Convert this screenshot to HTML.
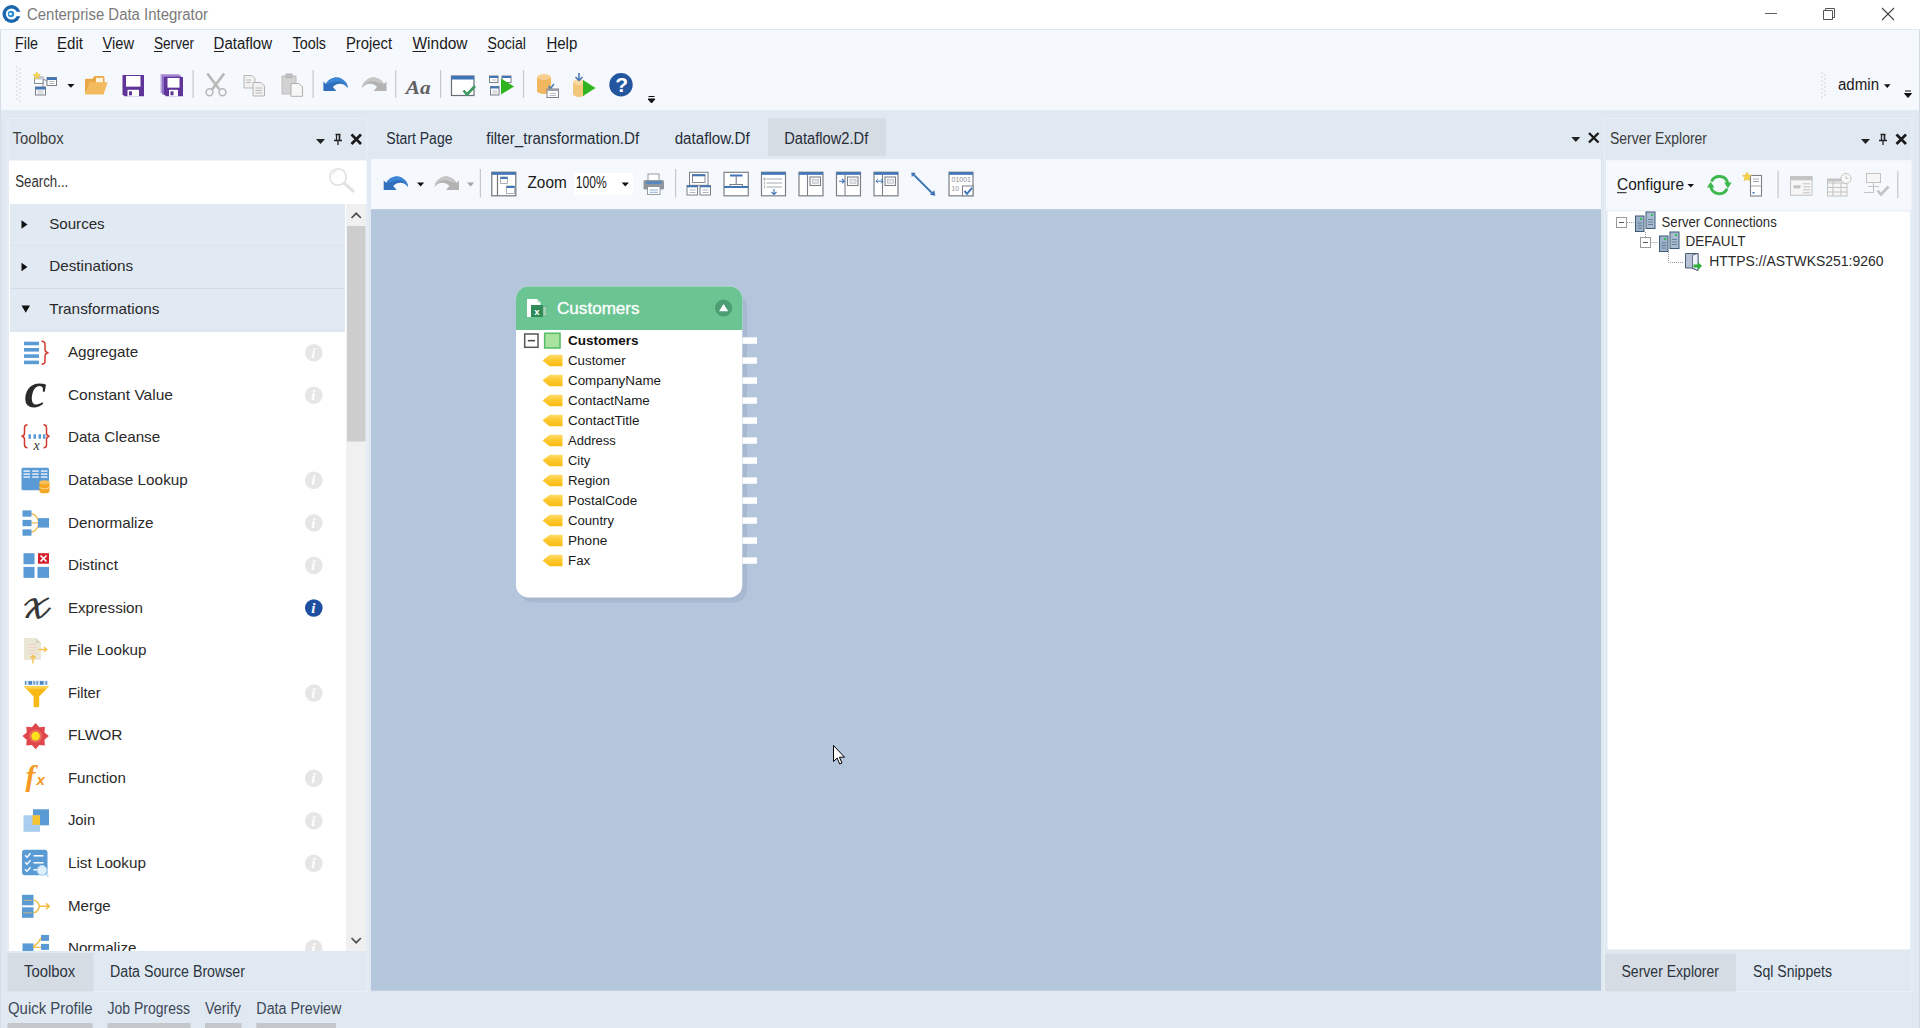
<!DOCTYPE html>
<html><head><meta charset="utf-8"><title>Centerprise Data Integrator</title>
<style>
*{margin:0;padding:0}
html,body{width:1920px;height:1028px;overflow:hidden;background:#e0e9f2}
svg{display:block;font-family:"Liberation Sans","DejaVu Sans",sans-serif}
text{white-space:pre}
</style></head><body>
<svg width="1920" height="1028" viewBox="0 0 1920 1028">
<rect x="0" y="0" width="1920" height="1028" fill="#e0e9f2" />
<rect x="0" y="0" width="1920" height="29" fill="#ffffff" />
<rect x="0" y="29" width="1920" height="1" fill="#e3e6ea" />
<rect x="0" y="30" width="1920" height="80.2" fill="#f5f8fc" />
<rect x="0" y="30" width="1" height="998" fill="#d6dde6" />
<rect x="1919" y="30" width="1" height="998" fill="#d3dae3" />
<g transform="translate(11.5,14)"><circle r="9" fill="#1b66ad"/><circle r="5.6" fill="#fff"/><rect x="2" y="-2.2" width="8" height="4.4" fill="#fff"/><circle r="3.2" cx="-0.5" fill="#2d8fd3"/><circle r="1.3" cx="-1" fill="#fff"/></g>
<text x="27" y="20" font-size="16" fill="#7a7a7a" textLength="181" lengthAdjust="spacingAndGlyphs">Centerprise Data Integrator</text>
<path d="M1765 13.5h12" stroke="#5f5f5f" stroke-width="1" fill="none"/>
<path d="M1823.5 10.5h9v9h-9z M1825.5 10.5v-2h9v9h-2" stroke="#555" stroke-width="1" fill="none"/>
<path d="M1882 8l12 12M1894 8l-12 12" stroke="#444" stroke-width="1.1" fill="none"/>
<text x="15" y="48.6" font-size="16" fill="#1a1a1a" textLength="23" lengthAdjust="spacingAndGlyphs">File</text>
<path d="M15 51.5H21.5" stroke="#1a1a1a" stroke-width="1"/>
<text x="57" y="48.6" font-size="16" fill="#1a1a1a" textLength="26" lengthAdjust="spacingAndGlyphs">Edit</text>
<path d="M57.5 51.5H64.5" stroke="#1a1a1a" stroke-width="1"/>
<text x="102.5" y="48.6" font-size="16" fill="#1a1a1a" textLength="31.5" lengthAdjust="spacingAndGlyphs">View</text>
<path d="M102.5 51.5H111" stroke="#1a1a1a" stroke-width="1"/>
<text x="154" y="48.6" font-size="16" fill="#1a1a1a" textLength="40" lengthAdjust="spacingAndGlyphs">Server</text>
<path d="M154 51.5H162.5" stroke="#1a1a1a" stroke-width="1"/>
<text x="213.6" y="48.6" font-size="16" fill="#1a1a1a" textLength="58.4" lengthAdjust="spacingAndGlyphs">Dataflow</text>
<path d="M214 51.5H224" stroke="#1a1a1a" stroke-width="1"/>
<text x="292.5" y="48.6" font-size="16" fill="#1a1a1a" textLength="33.5" lengthAdjust="spacingAndGlyphs">Tools</text>
<path d="M292.5 51.5H300" stroke="#1a1a1a" stroke-width="1"/>
<text x="346" y="48.6" font-size="16" fill="#1a1a1a" textLength="46" lengthAdjust="spacingAndGlyphs">Project</text>
<path d="M346.5 51.5H354.5" stroke="#1a1a1a" stroke-width="1"/>
<text x="412.5" y="48.6" font-size="16" fill="#1a1a1a" textLength="55.0" lengthAdjust="spacingAndGlyphs">Window</text>
<path d="M412.5 51.5H426" stroke="#1a1a1a" stroke-width="1"/>
<text x="487.5" y="48.6" font-size="16" fill="#1a1a1a" textLength="38.5" lengthAdjust="spacingAndGlyphs">Social</text>
<path d="M487.5 51.5H494.5" stroke="#1a1a1a" stroke-width="1"/>
<text x="546.4" y="48.6" font-size="16" fill="#1a1a1a" textLength="30.9" lengthAdjust="spacingAndGlyphs">Help</text>
<path d="M546.5 51.5H556.7" stroke="#1a1a1a" stroke-width="1"/>
<g fill="#e3e6eb"><rect x="16" y="66" width="2" height="2"/><rect x="19" y="68" width="2" height="2"/><rect x="16" y="70" width="2" height="2"/><rect x="19" y="72" width="2" height="2"/><rect x="16" y="74" width="2" height="2"/><rect x="19" y="76" width="2" height="2"/><rect x="16" y="78" width="2" height="2"/><rect x="19" y="80" width="2" height="2"/><rect x="16" y="82" width="2" height="2"/><rect x="19" y="84" width="2" height="2"/><rect x="16" y="86" width="2" height="2"/><rect x="19" y="88" width="2" height="2"/><rect x="16" y="90" width="2" height="2"/><rect x="19" y="92" width="2" height="2"/><rect x="16" y="94" width="2" height="2"/><rect x="19" y="96" width="2" height="2"/><rect x="16" y="98" width="2" height="2"/><rect x="19" y="100" width="2" height="2"/></g>
<g fill="#e3e6eb"><rect x="1821" y="72" width="2" height="2"/><rect x="1824" y="74" width="2" height="2"/><rect x="1821" y="76" width="2" height="2"/><rect x="1824" y="78" width="2" height="2"/><rect x="1821" y="80" width="2" height="2"/><rect x="1824" y="82" width="2" height="2"/><rect x="1821" y="84" width="2" height="2"/><rect x="1824" y="86" width="2" height="2"/><rect x="1821" y="88" width="2" height="2"/><rect x="1824" y="90" width="2" height="2"/><rect x="1821" y="92" width="2" height="2"/><rect x="1824" y="94" width="2" height="2"/><rect x="1821" y="96" width="2" height="2"/></g>
<rect x="192.5" y="70" width="1.2" height="28" fill="#c4c8ce"/>
<rect x="312.5" y="70" width="1.2" height="28" fill="#c4c8ce"/>
<rect x="395.1" y="70" width="1.2" height="28" fill="#c4c8ce"/>
<rect x="440.0" y="70" width="1.2" height="28" fill="#c4c8ce"/>
<rect x="522.9" y="70" width="1.2" height="28" fill="#c4c8ce"/>
<g><path d="M41 78l8 4M43 80v9h-3" stroke="#8a8e95" fill="none"/><rect x="34.5" y="77" width="8.5" height="6.5" fill="#fff" stroke="#8a8e95" stroke-width="1"/><rect x="34.5" y="77" width="8.5" height="2.5" fill="#c9ccd2"/><path d="M36.800 72l1 2.300 2.500 0.300-1.900 1.700 0.500 2.500-2.100-1.300-2.100 1.300 0.500-2.500-1.900-1.700 2.500-0.300z" fill="#f6d85a" stroke="#ecc33a" stroke-width="0.700"/><rect x="47" y="77.5" width="9.5" height="8" fill="#fff" stroke="#7b7f86" stroke-width="1"/><rect x="47" y="77.5" width="9.5" height="2.5" fill="#3f74b8"/><rect x="35.5" y="87" width="10" height="8" fill="#fff" stroke="#7b7f86" stroke-width="1"/><rect x="35.5" y="87" width="10" height="2.5" fill="#3f74b8"/><path d="M49 81.5h5.5M49 83.5h5.5M37.5 91h6M37.5 93h6" stroke="#a8acb2" stroke-width="0.8"/></g>
<path d="M67.3 84h7.2l-3.6 3.8z" fill="#111"/>
<g><path d="M85 94.500V80q0-1.200 1.200-1.200h6.300l2-2.800h8.500q1.500 0 1.500 1.500V84H90z" fill="#eaa844"/><path d="M96 77.800h7v5h-7z" fill="#fdf3df"/><path d="M85.300 94.500l4.200-12.300h18.200l-4.200 12.300z" fill="#f3bb5e"/></g>
<path d="M122.5 75h21.5v21.3h-19.5l-2-2z" fill="#5f3599"/><rect x="126.0" y="76" width="14.5" height="10.65" fill="#fff"/><rect x="127.5" y="89.8" width="11.5" height="6.5" fill="#fff"/><rect x="129.0" y="91.3" width="3" height="4" fill="#5f3599"/>
<path d="M160.5 74h19v19h-19z" fill="#b9a4dc"/><path d="M162 75.5h19v19h-19z" fill="#8e6fc6"/><path d="M164 77h19v19.3h-17l-2-2z" fill="#5f3599"/><rect x="167.5" y="78" width="12" height="9.65" fill="#fff"/><rect x="169" y="89.8" width="9" height="6.5" fill="#fff"/><rect x="170.5" y="91.3" width="3" height="4" fill="#5f3599"/>
<g stroke="#b9b9b9" fill="none" stroke-width="2.700"><path d="M207.300 73.500l12.200 16M224.200 73.500l-12.200 16"/><circle cx="209.500" cy="92.200" r="3.400" stroke-width="1.600"/><circle cx="222.500" cy="92.200" r="3.400" stroke-width="1.600"/></g>
<g fill="#f1f1f1" stroke="#b5b5b5"><path d="M244 75.500h8l3 3v9.500h-11z"/><path d="M253 82.500h8l3.500 3.500v10h-11.500z"/></g><path d="M246 80h5M246 82.500h5M255.500 88h6.500M255.500 90.500h6.500M255.500 93h6.500" stroke="#b5b5b5" stroke-width="0.9"/>
<g><rect x="282" y="76" width="14" height="18" fill="#d2d2d2" stroke="#bdbdbd"/><rect x="286" y="74" width="6" height="3.500" fill="#c2c2c2" stroke="#aaa" stroke-width="0.8"/><path d="M291 83.500h8l3.500 3.500v9.300h-11.500z" fill="#f7f7f7" stroke="#b0b0b0"/></g>
<g transform="translate(323.4,76.5)"><path d="M0 14.5V5l2.600 2.400C6 1.500 13 -0.500 18.500 2.500 22.500 4.800 24.300 8 24.300 11.500 21 6.500 14 5.500 9.500 10.500L13 14.500z" fill="#2f6fbd"/><path d="M2.600 7.400C6 1.500 13 -0.500 18.500 2.500 22.500 4.800 24.300 8 24.300 11.500 22 6 15 3 9 6z" fill="#3b86d6"/></g>
<g transform="translate(386.5,76.5) scale(-1,1)"><path d="M0 14.5V5l2.600 2.400C6 1.500 13 -0.500 18.500 2.500 22.500 4.800 24.300 8 24.300 11.500 21 6.500 14 5.500 9.500 10.500L13 14.500z" fill="#b3b3b3"/><path d="M2.600 7.400C6 1.500 13 -0.500 18.500 2.500 22.500 4.800 24.300 8 24.300 11.500 22 6 15 3 9 6z" fill="#c6c6c6"/></g>
<text x="405.8" y="94.3" font-size="19.5" fill="#626262" textLength="24.8" lengthAdjust="spacingAndGlyphs" font-weight="bold" font-style="italic" font-family='"Liberation Serif",serif'>Aa</text>
<g><rect x="451.5" y="76" width="22.5" height="19.5" fill="#fff" stroke="#6b7078" stroke-width="1.2"/><rect x="451.5" y="76" width="22.5" height="3.5" fill="#3f74b8"/><path d="M463.500 90.500l3.500 4 8-8.500" stroke="#3d9a5f" stroke-width="2.600" fill="none"/></g>
<g><rect x="489.5" y="76" width="8.5" height="6.5" fill="#fff" stroke="#7b7f86" stroke-width="1"/><rect x="489.5" y="76" width="8.5" height="2" fill="#3f74b8"/><rect x="502" y="76" width="9" height="6.5" fill="#fff" stroke="#7b7f86" stroke-width="1"/><rect x="502" y="76" width="9" height="2" fill="#3f74b8"/><rect x="490.5" y="86.5" width="8.5" height="8.5" fill="#fff" stroke="#7b7f86" stroke-width="1"/><rect x="490.5" y="86.5" width="8.5" height="2" fill="#3f74b8"/><path d="M491.5 80h5M492.500 91h5M492.500 93h5" stroke="#a8acb2" stroke-width="0.800"/><path d="M501 78.500v16l13-8z" fill="#2fb41f"/></g>
<g><path d="M537 77v14a7.0 3 0 0 0 14 0v-14z" fill="#f0b660"/><ellipse cx="544.0" cy="77" rx="7.0" ry="3" fill="#f7cf8f"/><path d="M548.500 86l2 2.500 3.500-4.500" stroke="#4d7fb5" stroke-width="1.600" fill="none"/><rect x="547" y="89" width="11.5" height="8.5" fill="#fff" stroke="#7b7f86" stroke-width="1"/><rect x="547" y="89" width="11.5" height="2" fill="#9aa0a8"/><path d="M549.5 93.500h6.500M549.500 95.500h6.500" stroke="#a8acb2" stroke-width="0.800"/></g>
<g><path d="M573 82v12a6.0 3 0 0 0 12 0v-12z" fill="#f2c77c"/><ellipse cx="579.0" cy="82" rx="6.0" ry="3" fill="#f7d9a0"/><path d="M579 73v7M575.500 77l3.500 3.500 3.500-3.500" stroke="#3f74b8" stroke-width="1.500" fill="none"/><path d="M583 80v16l12.500-8z" fill="#2fb41f"/></g>
<circle cx="621" cy="84.800" r="11.700" fill="#24559f"/>
<text x="615.3" y="92.3" font-size="21" fill="#fff" font-weight="bold">?</text>
<path d="M648.5 96.5h6M648.0 99.0h7l-3.500 4z" stroke="#111" stroke-width="1" fill="#111"/>
<path d="M1905 91h6M1904.5 93.5h7l-3.500 4z" stroke="#111" stroke-width="1" fill="#111"/>
<text x="1838" y="90" font-size="16" fill="#1a1a1a" textLength="41" lengthAdjust="spacingAndGlyphs">admin</text>
<path d="M1884 84.200h6.500l-3.250 3.700z" fill="#111"/>
<rect x="8" y="118.500" width="359" height="873" fill="none" stroke="#e9eff6" stroke-width="1"/>
<text x="12.6" y="144" font-size="16" fill="#3c3c3c" textLength="51.2" lengthAdjust="spacingAndGlyphs">Toolbox</text>
<path d="M316 139h9l-4.500 5z" fill="#222"/>
<path d="M335.5 134.5h5M336.5 134.5v5.500M339.5 134.5v5.500M334 140.5h8M338 140.5v4.500" stroke="#222" stroke-width="1.300" fill="none"/><rect x="338.8" y="134.5" width="1.400" height="5.500" fill="#222"/>
<path d="M351.5 134.5l9.500 9.500M361.0 134.5l-9.500 9.500" stroke="#1a1a1a" stroke-width="2.700" fill="none"/>
<rect x="9" y="160.5" width="357.5" height="43.5" fill="#ffffff" />
<text x="15.2" y="186.5" font-size="16" fill="#333" textLength="53.1" lengthAdjust="spacingAndGlyphs">Search...</text>
<g fill="none" stroke="#e2e2e2"><circle cx="338" cy="177" r="8.200" stroke-width="1.800"/><path d="M344.500 183.500l8.500 7.500" stroke-width="3.200" stroke-linecap="round"/><path d="M332.500 175a6 6 0 0 1 4-4" stroke-width="1"/></g>
<rect x="9" y="204" width="337.5" height="747" fill="#ffffff" />
<rect x="346.5" y="204" width="19.5" height="747" fill="#f0f0f0" />
<rect x="347" y="226" width="18.5" height="215.5" fill="#cdcdcd" />
<path d="M351.500 218l4.700-4.700 4.700 4.700" stroke="#505050" stroke-width="1.700" fill="none"/>
<path d="M351.500 938l4.700 4.700 4.700-4.700" stroke="#505050" stroke-width="1.700" fill="none"/>
<rect x="10" y="204.0" width="335" height="42.5" fill="#e1e9f3" />
<rect x="10" y="245.5" width="335" height="1" fill="#d3ddea" />
<text x="49.2" y="228.6" font-size="15" fill="#2a2a2a" textLength="55.5" lengthAdjust="spacingAndGlyphs">Sources</text>
<path d="M21.500 220.2v8.600l6-4.300z" fill="#111"/>
<rect x="10" y="246.5" width="335" height="42.5" fill="#e1e9f3" />
<rect x="10" y="288.0" width="335" height="1" fill="#d3ddea" />
<text x="49.2" y="271.1" font-size="15" fill="#2a2a2a" textLength="84.0" lengthAdjust="spacingAndGlyphs">Destinations</text>
<path d="M21.500 262.7v8.600l6-4.300z" fill="#111"/>
<rect x="10" y="289.0" width="335" height="42.5" fill="#e1e9f3" />
<rect x="10" y="330.5" width="335" height="1" fill="#d3ddea" />
<text x="49.2" y="313.6" font-size="15" fill="#2a2a2a" textLength="110.2" lengthAdjust="spacingAndGlyphs">Transformations</text>
<path d="M21.500 305.5h8.500l-4.250 7.200z" fill="#111"/>
<clipPath id="lc"><rect x="9" y="204" width="357" height="747"/></clipPath><g clip-path="url(#lc)">
<text x="67.9" y="357.3" font-size="15" fill="#2a2a2a" textLength="70.3" lengthAdjust="spacingAndGlyphs">Aggregate</text>
<circle cx="313.800" cy="352.7" r="8.800" fill="#e6e6e6"/>
<text x="311.3" y="357.7" font-size="15" fill="#fff" font-weight="bold" font-style="italic" font-family='"Liberation Serif",serif'>i</text>
<text x="67.9" y="399.9" font-size="15" fill="#2a2a2a" textLength="105.1" lengthAdjust="spacingAndGlyphs">Constant Value</text>
<circle cx="313.800" cy="395.2" r="8.800" fill="#e6e6e6"/>
<text x="311.3" y="400.2" font-size="15" fill="#fff" font-weight="bold" font-style="italic" font-family='"Liberation Serif",serif'>i</text>
<text x="67.9" y="442.4" font-size="15" fill="#2a2a2a" textLength="92.3" lengthAdjust="spacingAndGlyphs">Data Cleanse</text>
<text x="67.9" y="484.9" font-size="15" fill="#2a2a2a" textLength="119.9" lengthAdjust="spacingAndGlyphs">Database Lookup</text>
<circle cx="313.800" cy="480.3" r="8.800" fill="#e6e6e6"/>
<text x="311.3" y="485.3" font-size="15" fill="#fff" font-weight="bold" font-style="italic" font-family='"Liberation Serif",serif'>i</text>
<text x="67.9" y="527.5" font-size="15" fill="#2a2a2a" textLength="85.7" lengthAdjust="spacingAndGlyphs">Denormalize</text>
<circle cx="313.800" cy="522.9" r="8.800" fill="#e6e6e6"/>
<text x="311.3" y="527.9" font-size="15" fill="#fff" font-weight="bold" font-style="italic" font-family='"Liberation Serif",serif'>i</text>
<text x="67.9" y="570.0" font-size="15" fill="#2a2a2a" textLength="50.0" lengthAdjust="spacingAndGlyphs">Distinct</text>
<circle cx="313.800" cy="565.4" r="8.800" fill="#e6e6e6"/>
<text x="311.3" y="570.4" font-size="15" fill="#fff" font-weight="bold" font-style="italic" font-family='"Liberation Serif",serif'>i</text>
<text x="67.9" y="612.6" font-size="15" fill="#2a2a2a" textLength="75.1" lengthAdjust="spacingAndGlyphs">Expression</text>
<circle cx="313.800" cy="608.0" r="8.800" fill="#1f4fa0"/>
<text x="311.3" y="613.0" font-size="15" fill="#fff" font-weight="bold" font-style="italic" font-family='"Liberation Serif",serif'>i</text>
<text x="67.9" y="655.1" font-size="15" fill="#2a2a2a" textLength="78.6" lengthAdjust="spacingAndGlyphs">File Lookup</text>
<text x="67.9" y="697.7" font-size="15" fill="#2a2a2a" textLength="32.8" lengthAdjust="spacingAndGlyphs">Filter</text>
<circle cx="313.800" cy="693.1" r="8.800" fill="#e6e6e6"/>
<text x="311.3" y="698.1" font-size="15" fill="#fff" font-weight="bold" font-style="italic" font-family='"Liberation Serif",serif'>i</text>
<text x="67.9" y="740.2" font-size="15" fill="#2a2a2a" textLength="54.6" lengthAdjust="spacingAndGlyphs">FLWOR</text>
<text x="67.9" y="782.8" font-size="15" fill="#2a2a2a" textLength="57.9" lengthAdjust="spacingAndGlyphs">Function</text>
<circle cx="313.800" cy="778.2" r="8.800" fill="#e6e6e6"/>
<text x="311.3" y="783.2" font-size="15" fill="#fff" font-weight="bold" font-style="italic" font-family='"Liberation Serif",serif'>i</text>
<text x="67.9" y="825.3" font-size="15" fill="#2a2a2a" textLength="27.3" lengthAdjust="spacingAndGlyphs">Join</text>
<circle cx="313.800" cy="820.7" r="8.800" fill="#e6e6e6"/>
<text x="311.3" y="825.7" font-size="15" fill="#fff" font-weight="bold" font-style="italic" font-family='"Liberation Serif",serif'>i</text>
<text x="67.9" y="867.9" font-size="15" fill="#2a2a2a" textLength="78.1" lengthAdjust="spacingAndGlyphs">List Lookup</text>
<circle cx="313.800" cy="863.3" r="8.800" fill="#e6e6e6"/>
<text x="311.3" y="868.3" font-size="15" fill="#fff" font-weight="bold" font-style="italic" font-family='"Liberation Serif",serif'>i</text>
<text x="67.9" y="910.5" font-size="15" fill="#2a2a2a" textLength="42.9" lengthAdjust="spacingAndGlyphs">Merge</text>
<text x="67.9" y="953.0" font-size="15" fill="#2a2a2a" textLength="68.6" lengthAdjust="spacingAndGlyphs">Normalize</text>
<circle cx="313.800" cy="948.4" r="8.800" fill="#e6e6e6"/>
<text x="311.3" y="953.4" font-size="15" fill="#fff" font-weight="bold" font-style="italic" font-family='"Liberation Serif",serif'>i</text>
<g><rect x="24" y="341.7" width="15" height="3.600" fill="#5b9bd5"/><rect x="24" y="348.0" width="15" height="3.600" fill="#5b9bd5"/><rect x="24" y="354.3" width="15" height="3.600" fill="#5b9bd5"/><rect x="24" y="360.6" width="15" height="3.600" fill="#5b9bd5"/><path d="M41.500 341.2q3.500 0 3.500 3v5q0 3 3.500 3.500q-3.500 0.500-3.500 3.500v5q0 3-3.500 3" stroke="#d23a2e" stroke-width="1.500" fill="none"/></g>
<text x="24.5" y="407.0" font-size="50" fill="#2a2a2a" font-weight="bold" font-style="italic" font-family='"Liberation Serif",serif'>c</text>
<g fill="none" stroke="#d23a2e" stroke-width="1.500"><path d="M27.500 424.8q-3 0-3 3v5.500q0 2.500-3 3q3 0.500 3 3v5.500q0 3 3 3"/><path d="M43.500 424.8q3 0 3 3v5.500q0 2.500 3 3q-3 0.500-3 3v5.500q0 3-3 3"/></g><rect x="28.5" y="434.3" width="2.500" height="4.500" fill="#5b9bd5"/><rect x="33.5" y="434.3" width="2.500" height="4.500" fill="#5b9bd5"/><rect x="38.5" y="434.3" width="2.500" height="4.500" fill="#5b9bd5"/><rect x="43" y="434.3" width="2.500" height="4.500" fill="#5b9bd5"/>
<text x="33.5" y="450.3" font-size="14" fill="#333" font-style="italic" font-family='"Liberation Serif",serif'>x</text>
<g><rect x="21.500" y="467.8" width="27.500" height="22.500" rx="1.500" fill="#5b9bd5"/><rect x="23.5" y="470.3" width="6.500" height="1.600" fill="#dbe9f7"/><rect x="23.5" y="473.3" width="6.500" height="1.600" fill="#dbe9f7"/><rect x="23.5" y="476.3" width="6.500" height="1.600" fill="#dbe9f7"/><rect x="32.2" y="470.3" width="6.500" height="1.600" fill="#dbe9f7"/><rect x="32.2" y="473.3" width="6.500" height="1.600" fill="#dbe9f7"/><rect x="32.2" y="476.3" width="6.500" height="1.600" fill="#dbe9f7"/><rect x="40.9" y="470.3" width="6.500" height="1.600" fill="#dbe9f7"/><rect x="40.9" y="473.3" width="6.500" height="1.600" fill="#dbe9f7"/><rect x="40.9" y="476.3" width="6.500" height="1.600" fill="#dbe9f7"/><path d="M39.500 482.3v9a5 2 0 0 0 10 0v-9z" fill="#f5a623"/><ellipse cx="44.500" cy="482.3" rx="5" ry="2" fill="#fbc25a"/><path d="M39.500 486.8a5 2 0 0 0 10 0" stroke="#fbd58c" fill="none"/></g>
<g><path d="M31 513.4q6 1 8 9.500M31 532.4q6-1 8-9.500M31 522.9h8" stroke="#f0b64a" stroke-width="1.300" fill="none"/><rect x="22.500" y="510.4" width="9" height="6.300" fill="#5b9bd5"/><rect x="22.500" y="519.9" width="9" height="6.300" fill="#5b9bd5"/><rect x="22.500" y="529.4" width="9" height="6.300" fill="#5b9bd5"/><rect x="38" y="518.1" width="11" height="9.500" fill="#5b9bd5"/></g>
<g fill="#5b9bd5"><rect x="23.500" y="553.2" width="11" height="11"/><rect x="23.500" y="566.9" width="11" height="11"/><rect x="37.500" y="566.9" width="11.500" height="11"/><rect x="38" y="553.2" width="11" height="10.500" fill="#d5202a"/><path d="M40.500 555.5l6 6M46.500 555.5l-6 6" stroke="#fff" stroke-width="1.700"/></g>
<text x="20.8" y="618.3" font-size="39" fill="#383838" font-family='"DejaVu Math TeX Gyre","DejaVu Sans",serif'>𝓍</text>
<g><path d="M24 638.0h12l5 5v17h-17z" fill="#ebe7d6"/><path d="M36 638.0v5h5z" fill="#d9d4bf"/><path d="M28 644.5h8M28 647.5h9M28 650.5h9M28 653.5h9" stroke="#f3cfc0" stroke-width="0.800"/><path d="M38.500 649.5h8M44 647.0l2.800 2.500-2.800 2.500" stroke="#f4c04e" stroke-width="1.400" fill="none"/><path d="M33 663.5v-8M30.300 658.3l2.700-2.800 2.700 2.800" stroke="#f4c04e" stroke-width="1.400" fill="none"/></g>
<g><rect x="24.500" y="680.6" width="23.500" height="4.500" fill="#cfe0f2"/><rect x="25" y="681.1" width="1.2" height="3.600" fill="#4a86c5"/><rect x="28.5" y="681.1" width="3.5" height="3.600" fill="#4a86c5"/><rect x="33.5" y="681.1" width="1.2" height="3.600" fill="#4a86c5"/><rect x="36.5" y="681.1" width="1.2" height="3.600" fill="#4a86c5"/><rect x="40" y="681.1" width="3.5" height="3.600" fill="#4a86c5"/><rect x="45.5" y="681.1" width="1.2" height="3.600" fill="#4a86c5"/><path d="M23.600 686.1h25.600l-10 10.500v9.500q0 1.200-1.500 1.200h-2.600q-1.500 0-1.500-1.200v-9.500z" fill="#f9b916"/><path d="M23.600 686.1h25.600l-2.500 2.600h-20.600z" fill="#fdd24f"/></g>
<g><polygon points="35.6,722.9 39.3,727.2 44.9,726.8 44.5,732.4 48.8,736.1 44.5,739.8 44.9,745.4 39.3,745.0 35.6,749.3 31.9,745.0 26.3,745.4 26.7,739.8 22.4,736.1 26.7,732.4 26.3,726.8 31.9,727.2" fill="#e0474c"/><circle cx="35.600" cy="736.1" r="6.500" fill="#ea6b5a"/><circle cx="35.600" cy="736.1" r="4.300" fill="#f9e21a"/></g>
<text x="25.5" y="786.2" font-size="30" fill="#f59a23" font-weight="bold" font-style="italic" font-family='"Liberation Serif",serif'>f</text>
<text x="36.5" y="785.2" font-size="15" fill="#f59a23" font-weight="bold" font-style="italic">x</text>
<g><rect x="33" y="809.3" width="16" height="16" fill="#5b9bd5"/><rect x="23.500" y="815.3" width="16.500" height="16.500" fill="#a9cdee"/><rect x="32.500" y="815.3" width="7.500" height="9.500" fill="#f6c433"/></g>
<g><rect x="22" y="849.8" width="25.500" height="25.500" rx="3" fill="#5b9bd5"/><path d="M25 855.3l2 2 3.500-4" stroke="#fff" stroke-width="1.300" fill="none"/><path d="M33.500 855.8h10" stroke="#fff" stroke-width="1.500"/><path d="M25 862.3l2 2 3.500-4" stroke="#fff" stroke-width="1.300" fill="none"/><path d="M33.500 862.8h10" stroke="#fff" stroke-width="1.500"/><path d="M25 869.3l2 2 3.500-4" stroke="#fff" stroke-width="1.300" fill="none"/><path d="M33.500 869.8h4" stroke="#fff" stroke-width="1.500"/><circle cx="42" cy="870.3" r="4.800" fill="#dff0fb" stroke="#b7dcf3" stroke-width="1"/><path d="M45.500 873.8l3 3" stroke="#b7dcf3" stroke-width="1.500"/></g>
<g><rect x="22" y="894.8" width="11.500" height="10.500" fill="#5b9bd5"/><rect x="22" y="907.3" width="11.500" height="10.500" fill="#5b9bd5"/><path d="M23.500 900.3h8M23.500 912.8h8" stroke="#f0c060" stroke-width="1" stroke-dasharray="2 1"/><path d="M33.500 900.3q4 0 6 6M33.500 912.8q4 0 6-6.500M39 906.3h10M46 903.3l3.300 3-3.300 3" stroke="#f2bc45" stroke-width="1.500" fill="none"/></g>
<g><rect x="41" y="934.9" width="8" height="6" fill="#5b9bd5"/><rect x="41" y="943.9" width="8" height="6" fill="#5b9bd5"/><rect x="22.500" y="943.4" width="11" height="9" fill="#5b9bd5"/><path d="M33 946.4q4-1 8-8.500M33 947.4h8" stroke="#f2bc45" stroke-width="1.400" fill="none"/></g>
</g>
<rect x="7.5" y="953" width="86" height="38.5" fill="#d6dce3" />
<text x="24" y="976.6" font-size="16" fill="#2c3440" textLength="51.2" lengthAdjust="spacingAndGlyphs">Toolbox</text>
<text x="110" y="976.6" font-size="16" fill="#2c3440" textLength="135" lengthAdjust="spacingAndGlyphs">Data Source Browser</text>
<text x="8" y="1014" font-size="16" fill="#3d4857" textLength="84.6" lengthAdjust="spacingAndGlyphs">Quick Profile</text>
<rect x="7.5" y="1023" width="85.1" height="5" fill="#c3c6ca" />
<text x="107.5" y="1014" font-size="16" fill="#3d4857" textLength="82.5" lengthAdjust="spacingAndGlyphs">Job Progress</text>
<rect x="107.5" y="1023" width="83.0" height="5" fill="#c3c6ca" />
<text x="205" y="1014" font-size="16" fill="#3d4857" textLength="36" lengthAdjust="spacingAndGlyphs">Verify</text>
<rect x="205" y="1023" width="36.5" height="5" fill="#c3c6ca" />
<text x="256.3" y="1014" font-size="16" fill="#3d4857" textLength="85.1" lengthAdjust="spacingAndGlyphs">Data Preview</text>
<rect x="256.3" y="1023" width="79.59999999999997" height="5" fill="#c3c6ca" />
<rect x="768" y="118.5" width="118.2" height="37.5" fill="#d6dce3" />
<text x="386.3" y="143.7" font-size="16" fill="#262d38" textLength="66.2" lengthAdjust="spacingAndGlyphs">Start Page</text>
<text x="486.2" y="143.7" font-size="16" fill="#262d38" textLength="153.0" lengthAdjust="spacingAndGlyphs">filter_transformation.Df</text>
<text x="674.7" y="143.7" font-size="16" fill="#262d38" textLength="75.0" lengthAdjust="spacingAndGlyphs">dataflow.Df</text>
<text x="784.2" y="143.7" font-size="16" fill="#262d38" textLength="84.1" lengthAdjust="spacingAndGlyphs">Dataflow2.Df</text>
<path d="M1571.300 137h9l-4.500 5z" fill="#222"/>
<path d="M1589 133l9.500 9.500M1598.500 133l-9.500 9.500" stroke="#1a1a1a" stroke-width="2.400" fill="none"/>
<rect x="371" y="159" width="1230" height="50.2" fill="#f5f8fc" />
<rect x="371" y="209.2" width="1230" height="781.5" fill="#b4c6db" />
<g transform="translate(383.7,175.5)"><path d="M0 14.5V5l2.600 2.400C6 1.500 13 -0.500 18.500 2.500 22.500 4.800 24.300 8 24.300 11.500 21 6.500 14 5.500 9.500 10.500L13 14.500z" fill="#2f6fbd"/><path d="M2.600 7.400C6 1.500 13 -0.500 18.500 2.500 22.500 4.800 24.300 8 24.300 11.500 22 6 15 3 9 6z" fill="#3b86d6"/></g>
<path d="M417 182.500h7.200l-3.600 4z" fill="#111"/>
<g transform="translate(459,175.5) scale(-1,1)"><path d="M0 14.5V5l2.600 2.400C6 1.500 13 -0.500 18.500 2.500 22.500 4.800 24.300 8 24.300 11.500 21 6.500 14 5.500 9.500 10.500L13 14.500z" fill="#b3b3b3"/><path d="M2.600 7.400C6 1.500 13 -0.500 18.500 2.500 22.500 4.800 24.300 8 24.300 11.500 22 6 15 3 9 6z" fill="#c6c6c6"/></g>
<path d="M467 182.500h7.200l-3.600 4z" fill="#a5a5a5"/>
<rect x="479.8" y="169" width="1.2" height="28.5" fill="#c4c8ce"/>
<rect x="675.0" y="169" width="1.2" height="28.5" fill="#c4c8ce"/>
<g><rect x="491.8" y="172.2" width="24" height="23.6" fill="#fff" stroke="#6f747c" stroke-width="1.2"/><rect x="491.8" y="172.2" width="24" height="2.6" fill="#3f74b8"/><path d="M497.500 174.800v21" stroke="#6f747c" stroke-width="1.200"/><rect x="500.5" y="177" width="7" height="6.5" fill="#fff" stroke="#9aa0a8" stroke-width="0.8"/><rect x="500.5" y="177" width="7" height="2" fill="#3f74b8"/><rect x="506.5" y="186" width="8" height="7.5" fill="#fff" stroke="#9aa0a8" stroke-width="0.8"/><rect x="506.5" y="186" width="8" height="2" fill="#3f74b8"/></g>
<text x="527.5" y="188.3" font-size="16" fill="#1a1a1a" textLength="39.2" lengthAdjust="spacingAndGlyphs">Zoom</text>
<rect x="574" y="173" width="59" height="21.7" fill="#ffffff" />
<text x="575.8" y="188.3" font-size="16" fill="#1a1a1a" textLength="30.9" lengthAdjust="spacingAndGlyphs">100%</text>
<path d="M621.700 182.500h7.200l-3.600 4z" fill="#111"/>
<g><rect x="648" y="174" width="11" height="7" fill="#fff" stroke="#8d9299" stroke-width="0.900"/><rect x="643.500" y="180" width="20.500" height="9.500" rx="1.500" fill="#8f959d"/><rect x="646" y="181.500" width="15.500" height="2.200" fill="#4a86c5"/><rect x="647.500" y="186.500" width="12.500" height="8" fill="#fff" stroke="#8d9299" stroke-width="0.900"/><path d="M649.500 190h8.500M649.500 192.300h8.500" stroke="#7aa6d6" stroke-width="0.900"/></g>
<g><rect x="689.5" y="172.300" width="18.500" height="13" fill="#fff" stroke="#7b8088"/><rect x="692.5" y="174.5" width="12.5" height="8" fill="#fff" stroke="#7b8088" stroke-width="0.9"/><rect x="692.5" y="174.5" width="12.5" height="1.8" fill="#3f74b8"/><rect x="687.0" y="185.5" width="10.5" height="9.5" fill="#fff" stroke="#7b8088" stroke-width="1"/><rect x="687.0" y="185.5" width="10.5" height="1.8" fill="#3f74b8"/><rect x="700.0" y="185.5" width="10.5" height="9.5" fill="#fff" stroke="#7b8088" stroke-width="1"/><rect x="700.0" y="185.5" width="10.5" height="1.8" fill="#3f74b8"/><path d="M689.5 190h6M689.5 192.500h6M702.5 190h6M702.5 192.500h6" stroke="#a8acb2" stroke-width="0.900"/></g>
<g><rect x="724" y="172.300" width="24.300" height="23.500" fill="#fff" stroke="#7b8088" stroke-width="1.200"/><path d="M730 175.500h12.500M724 187h24.300" stroke="#3f74b8" stroke-width="2.200"/><path d="M736.2 176v9M730 187v-2.500h12.500v2.500" stroke="#7b8088" stroke-width="1.100" fill="none"/></g>
<g><rect x="761.5" y="172.2" width="24" height="23.6" fill="#fff" stroke="#7b8088" stroke-width="1.2"/><rect x="761.5" y="172.2" width="24" height="2.6" fill="#3f74b8"/><path d="M766.5 179h15.500M766.5 183h15.500M766.5 187h15.500" stroke="#9aa0a8" stroke-width="0.900"/><path d="M764.5 177.500v3M763.0 179h3M764.5 181.500v3M764.5 185.500v3" stroke="#9aa0a8" stroke-width="0.800"/><path d="M774.0 189v5.500M771.5 192l2.500 2.500 2.500-2.500" stroke="#3f74b8" stroke-width="1.100" fill="none"/></g>
<g><rect x="799" y="172.2" width="24" height="23.6" fill="#fff" stroke="#7b8088" stroke-width="1.2"/><rect x="799" y="172.2" width="24" height="2.6" fill="#3f74b8"/><path d="M807.5 174.800v21" stroke="#7b8088" stroke-width="1.100"/><rect x="810" y="177" width="10.500" height="8.500" fill="#fff" stroke="#7b8088" stroke-width="1.100"/><rect x="812.5" y="179.200" width="6" height="4" fill="#e4e6ea" stroke="#a8acb2" stroke-width="0.600"/></g>
<g><rect x="836.5" y="172.2" width="24" height="23.6" fill="#fff" stroke="#7b8088" stroke-width="1.2"/><rect x="836.5" y="172.2" width="24" height="2.6" fill="#3f74b8"/><path d="M845.0 174.800v21" stroke="#7b8088" stroke-width="1.100"/><rect x="847.5" y="177" width="10.500" height="8.500" fill="#fff" stroke="#7b8088" stroke-width="1.100"/><rect x="850.0" y="179.200" width="6" height="4" fill="#e4e6ea" stroke="#a8acb2" stroke-width="0.600"/><path d="M839.0 181.200h5M842.0 179l2.300 2.200-2.300 2.200" stroke="#3f74b8" stroke-width="1.100" fill="none"/></g>
<g><rect x="874" y="172.2" width="24" height="23.6" fill="#fff" stroke="#7b8088" stroke-width="1.2"/><rect x="874" y="172.2" width="24" height="2.6" fill="#3f74b8"/><path d="M882.5 174.800v21" stroke="#7b8088" stroke-width="1.100"/><rect x="885" y="177" width="10.500" height="8.500" fill="#fff" stroke="#7b8088" stroke-width="1.100"/><rect x="887.5" y="179.200" width="6" height="4" fill="#e4e6ea" stroke="#a8acb2" stroke-width="0.600"/><path d="M876 181.200h7M878 179.200l-2 2 2 2M881 179.200l2 2-2 2" stroke="#3f74b8" stroke-width="1" fill="none"/></g>
<path d="M913.500 174.500l19 19" stroke="#3f74b8" stroke-width="1.800"/><path d="M911.300 172.500l4.500 0.500-4 4zM935.300 195.800l-5.500-1 4.500-4.500z" fill="#3f74b8"/>
<g><rect x="949" y="172.2" width="24" height="23.6" fill="#fff" stroke="#7b8088" stroke-width="1.2"/><rect x="949" y="172.2" width="24" height="2.6" fill="#3f74b8"/>
<text x="951.5" y="181.5" font-size="6.5" fill="#8a8f97" textLength="19.5" lengthAdjust="spacingAndGlyphs">01001</text>
<text x="951.5" y="190.5" font-size="6.5" fill="#8a8f97" textLength="7.5" lengthAdjust="spacingAndGlyphs">10</text>
<rect x="962.5" y="186" width="10.500" height="9.800" fill="#fff" stroke="#7b8088" stroke-width="1"/><path d="M964.5 191l2.500 2.800 5-6" stroke="#3f74b8" stroke-width="2" fill="none"/></g>
<rect x="520" y="294" width="227" height="308.500" rx="13" fill="#9fb0c9" opacity="0.600"/>
<rect x="516" y="286.500" width="226.300" height="311" rx="12.500" fill="#ffffff"/>
<path d="M516 330V299a12.500 12.500 0 0 1 12.500-12.500h201.300a12.500 12.500 0 0 1 12.500 12.500v31z" fill="#6bc592"/>
<g><path d="M527 299h10l3.500 3.500v14.500h-13.500z" fill="#fff"/><path d="M537 299v3.500h3.500z" fill="#cfe9da"/><rect x="531" y="305" width="12" height="12" fill="#2e8a57"/><rect x="543" y="306.500" width="3.800" height="9.500" fill="#9ed3b5" stroke="#5aa87d" stroke-width="0.600"/></g>
<text x="534.3" y="314.5" font-size="9.5" fill="#fff" font-weight="bold">x</text>
<text x="557" y="313.5" font-size="17" fill="#ffffff" textLength="82.6" lengthAdjust="spacingAndGlyphs" stroke="#fff" stroke-width="0.300">Customers</text>
<circle cx="723.600" cy="308" r="8.600" fill="#4c9d73"/><path d="M719 311.300h9.200l-4.600-7.300z" fill="#fff"/>
<rect x="524.700" y="334" width="13.300" height="13.300" fill="#fff" stroke="#555" stroke-width="1.500"/><path d="M527.800 340.650h7.200" stroke="#444" stroke-width="1.500"/>
<rect x="544.700" y="333.300" width="15.300" height="14.700" fill="#a8e4a0" stroke="#5bbd6a" stroke-width="1.600"/>
<text x="568" y="344.6" font-size="13" fill="#111" textLength="70.5" lengthAdjust="spacingAndGlyphs" font-weight="bold">Customers</text>
<defs><linearGradient id="fg" x1="0" y1="0" x2="0" y2="1"><stop offset="0" stop-color="#ffdf6e"/><stop offset="0.450" stop-color="#fdc830"/><stop offset="1" stop-color="#f9bb10"/></linearGradient></defs>
<rect x="742.5" y="337.3" width="14.5" height="6.5" fill="#ffffff" />
<path d="M542.500 360.5l7-5.800h13v11.600h-13z" fill="url(#fg)"/>
<text x="568" y="364.6" font-size="13" fill="#1a1a1a" textLength="57.6" lengthAdjust="spacingAndGlyphs">Customer</text>
<rect x="742.5" y="357.3" width="14.5" height="6.5" fill="#ffffff" />
<path d="M542.500 380.5l7-5.800h13v11.600h-13z" fill="url(#fg)"/>
<text x="568" y="384.6" font-size="13" fill="#1a1a1a" textLength="93" lengthAdjust="spacingAndGlyphs">CompanyName</text>
<rect x="742.5" y="377.3" width="14.5" height="6.5" fill="#ffffff" />
<path d="M542.500 400.5l7-5.800h13v11.600h-13z" fill="url(#fg)"/>
<text x="568" y="404.6" font-size="13" fill="#1a1a1a" textLength="81.7" lengthAdjust="spacingAndGlyphs">ContactName</text>
<rect x="742.5" y="397.3" width="14.5" height="6.5" fill="#ffffff" />
<path d="M542.500 420.5l7-5.800h13v11.600h-13z" fill="url(#fg)"/>
<text x="568" y="424.6" font-size="13" fill="#1a1a1a" textLength="71.6" lengthAdjust="spacingAndGlyphs">ContactTitle</text>
<rect x="742.5" y="417.3" width="14.5" height="6.5" fill="#ffffff" />
<path d="M542.500 440.5l7-5.800h13v11.600h-13z" fill="url(#fg)"/>
<text x="568" y="444.6" font-size="13" fill="#1a1a1a" textLength="47.8" lengthAdjust="spacingAndGlyphs">Address</text>
<rect x="742.5" y="437.3" width="14.5" height="6.5" fill="#ffffff" />
<path d="M542.500 460.5l7-5.800h13v11.600h-13z" fill="url(#fg)"/>
<text x="568" y="464.6" font-size="13" fill="#1a1a1a" textLength="22.2" lengthAdjust="spacingAndGlyphs">City</text>
<rect x="742.5" y="457.3" width="14.5" height="6.5" fill="#ffffff" />
<path d="M542.500 480.5l7-5.800h13v11.600h-13z" fill="url(#fg)"/>
<text x="568" y="484.6" font-size="13" fill="#1a1a1a" textLength="42" lengthAdjust="spacingAndGlyphs">Region</text>
<rect x="742.5" y="477.3" width="14.5" height="6.5" fill="#ffffff" />
<path d="M542.500 500.5l7-5.800h13v11.600h-13z" fill="url(#fg)"/>
<text x="568" y="504.6" font-size="13" fill="#1a1a1a" textLength="69.2" lengthAdjust="spacingAndGlyphs">PostalCode</text>
<rect x="742.5" y="497.3" width="14.5" height="6.5" fill="#ffffff" />
<path d="M542.500 520.5l7-5.800h13v11.600h-13z" fill="url(#fg)"/>
<text x="568" y="524.6" font-size="13" fill="#1a1a1a" textLength="46" lengthAdjust="spacingAndGlyphs">Country</text>
<rect x="742.5" y="517.3" width="14.5" height="6.5" fill="#ffffff" />
<path d="M542.500 540.5l7-5.800h13v11.600h-13z" fill="url(#fg)"/>
<text x="568" y="544.6" font-size="13" fill="#1a1a1a" textLength="39.3" lengthAdjust="spacingAndGlyphs">Phone</text>
<rect x="742.5" y="537.3" width="14.5" height="6.5" fill="#ffffff" />
<path d="M542.500 560.5l7-5.800h13v11.600h-13z" fill="url(#fg)"/>
<text x="568" y="564.6" font-size="13" fill="#1a1a1a" textLength="22.2" lengthAdjust="spacingAndGlyphs">Fax</text>
<rect x="742.5" y="557.3" width="14.5" height="6.5" fill="#ffffff" />
<path d="M833.500 745.500v16l3.700-3.500 2.500 6 2.300-1-2.600-5.800h5.100z" fill="#fff" stroke="#000" stroke-width="1" stroke-linejoin="miter"/>
<rect x="1604.500" y="118.500" width="307.500" height="873" fill="none" stroke="#e9eff6" stroke-width="1"/>
<text x="1610" y="144" font-size="16" fill="#3c3c3c" textLength="97" lengthAdjust="spacingAndGlyphs">Server Explorer</text>
<path d="M1861 139h9l-4.500 5z" fill="#222"/>
<path d="M1880.5 134.5h5M1881.5 134.5v5.500M1884.5 134.5v5.500M1879 140.5h8M1883 140.5v4.500" stroke="#222" stroke-width="1.300" fill="none"/><rect x="1883.8" y="134.5" width="1.400" height="5.500" fill="#222"/>
<path d="M1896.5 134.5l9.500 9.500M1906.0 134.5l-9.500 9.500" stroke="#1a1a1a" stroke-width="2.700" fill="none"/>
<rect x="1606" y="160.2" width="305.5" height="50.3" fill="#f5f8fc" />
<rect x="1607.5" y="211.3" width="302.7" height="738" fill="#ffffff" />
<text x="1617" y="189.9" font-size="16" fill="#1a1a1a" textLength="67" lengthAdjust="spacingAndGlyphs">Configure</text>
<path d="M1617 192.700h9.500" stroke="#1a1a1a" stroke-width="1"/>
<path d="M1687.500 184h6.500l-3.250 3.400z" fill="#111"/>
<g fill="none" stroke="#3fb94f" stroke-width="2.900"><path d="M1711.5 181.5A8.6 8.6 0 0 1 1727.8 183.6"/><path d="M1727.1 188.7A8.6 8.6 0 0 1 1710.8 186.6"/></g><path d="M1724.2 182.6h7.400l-3.700 5.800z" fill="#3fb94f"/><path d="M1714.4 187.6h-7.400l3.700-5.800z" fill="#3fb94f"/>
<g><rect x="1750.500" y="175.500" width="11" height="20.500" fill="#fff" stroke="#7b8088" stroke-width="1.100"/><path d="M1753 179h6M1753 181.500h6M1750.500 186h11" stroke="#9aa0a8" stroke-width="0.900"/><rect x="1752.500" y="192" width="2" height="1.500" fill="#3f74b8"/><path d="M1747 172l1.300 3 3.200 0.400-2.400 2.200 0.700 3.200-2.800-1.600-2.800 1.600 0.700-3.200-2.400-2.200 3.200-0.400z" fill="#f6d14a" stroke="#e6b422" stroke-width="0.500"/></g>
<rect x="1777.5" y="170.7" width="1.2" height="27.30000000000001" fill="#c4c8ce"/>
<rect x="1897.2" y="170.7" width="1.2" height="27.30000000000001" fill="#c4c8ce"/>
<g stroke="#c3c3c3" fill="#f6f6f6"><rect x="1790.500" y="176.800" width="21.500" height="18.500"/><rect x="1790.500" y="176.800" width="21.500" height="3" fill="#c3c3c3"/><path d="M1794 186.800h6M1803 183.800h7M1803 186.800h7M1803 189.800h7M1803 192.800h7" stroke-width="1"/><rect x="1793.500" y="185.300" width="7" height="3" fill="#c3c3c3" stroke="none"/></g>
<g stroke="#c3c3c3" fill="#f6f6f6"><rect x="1827.500" y="179" width="19.500" height="17"/><path d="M1827.500 183h19.500M1827.500 187.500h19.500M1827.500 192h19.500M1833 179v17M1841 183v13" stroke-width="1"/><rect x="1827.500" y="179" width="19.500" height="2.500" fill="#c3c3c3" stroke="none"/><circle cx="1846" cy="178.500" r="5" fill="#fafafa"/><path d="M1846 175.500v3h2.500" fill="none"/></g>
<g stroke="#c3c3c3" fill="#f6f6f6"><rect x="1866.500" y="173.500" width="14" height="9"/><path d="M1873.500 182.500v10M1868 186.500h11M1864 192.500h10" stroke-width="1.100" stroke-dasharray="none"/><path d="M1877.500 190.500l3.500 4 7.500-8" stroke-width="2.600" fill="none"/></g>
<path d="M1627 222.500h8M1645.500 232v10.500M1650.500 242.500h8M1668.500 252v10.500h15" stroke="#9a9a9a" stroke-width="1" stroke-dasharray="1 1" fill="none"/>
<rect x="1616.5" y="217.5" width="10" height="10" fill="#fff" stroke="#9a9a9a" stroke-width="1"/><path d="M1619.0 222.5h5" stroke="#555" stroke-width="1"/>
<g><rect x="1635.5" y="216" width="8.500" height="15.500" fill="#9fb3c8" stroke="#3d5a78" stroke-width="1"/><rect x="1646.0" y="212" width="9" height="16.500" fill="#aabdd0" stroke="#3d5a78" stroke-width="1"/><path d="M1637.5 223h4.500M1637.5 225.5h4.500M1637.5 228h4.500M1648.0 219.5h5M1648.0 222h5M1648.0 224.5h5" stroke="#5b7894" stroke-width="0.900"/><rect x="1640.0" y="218" width="2" height="2" fill="#31c15c"/><rect x="1651.0" y="214" width="2" height="2" fill="#31c15c"/></g>
<text x="1661.6" y="226.6" font-size="15" fill="#2a2a2a" textLength="115.1" lengthAdjust="spacingAndGlyphs">Server Connections</text>
<rect x="1640.5" y="237.5" width="10" height="10" fill="#fff" stroke="#9a9a9a" stroke-width="1"/><path d="M1643.0 242.5h5" stroke="#555" stroke-width="1"/>
<g><rect x="1659.5" y="236" width="8.500" height="15.500" fill="#9fb3c8" stroke="#3d5a78" stroke-width="1"/><rect x="1670.0" y="232" width="9" height="16.500" fill="#aabdd0" stroke="#3d5a78" stroke-width="1"/><path d="M1661.5 243h4.500M1661.5 245.5h4.500M1661.5 248h4.500M1672.0 239.5h5M1672.0 242h5M1672.0 244.5h5" stroke="#5b7894" stroke-width="0.900"/><rect x="1664.0" y="238" width="2" height="2" fill="#31c15c"/><rect x="1675.0" y="234" width="2" height="2" fill="#31c15c"/></g>
<text x="1685.6" y="246.3" font-size="15" fill="#2a2a2a" textLength="59.8" lengthAdjust="spacingAndGlyphs">DEFAULT</text>
<g><path d="M1685.500 253.500h12.500v17l-6.500-2.500h-6z" fill="#b9c1d6" stroke="#4b5878" stroke-width="1"/><path d="M1692.500 255v13l5.500 2.500v-17z" fill="#eef1f7" stroke="#4b5878" stroke-width="0.800"/><path d="M1693.500 264.500h4.500v-2.500l4 4-4 4v-2.500h-4.500z" fill="#2fae3a"/></g>
<text x="1709.2" y="266.4" font-size="15" fill="#2a2a2a" textLength="174.2" lengthAdjust="spacingAndGlyphs">HTTPS://ASTWKS251:9260</text>
<rect x="1605" y="953.5" width="131" height="38" fill="#d6dce3" />
<text x="1621.5" y="976.5" font-size="16" fill="#2c3440" textLength="97.5" lengthAdjust="spacingAndGlyphs">Server Explorer</text>
<text x="1753" y="976.5" font-size="16" fill="#2c3440" textLength="79" lengthAdjust="spacingAndGlyphs">Sql Snippets</text>
</svg>
</body></html>
